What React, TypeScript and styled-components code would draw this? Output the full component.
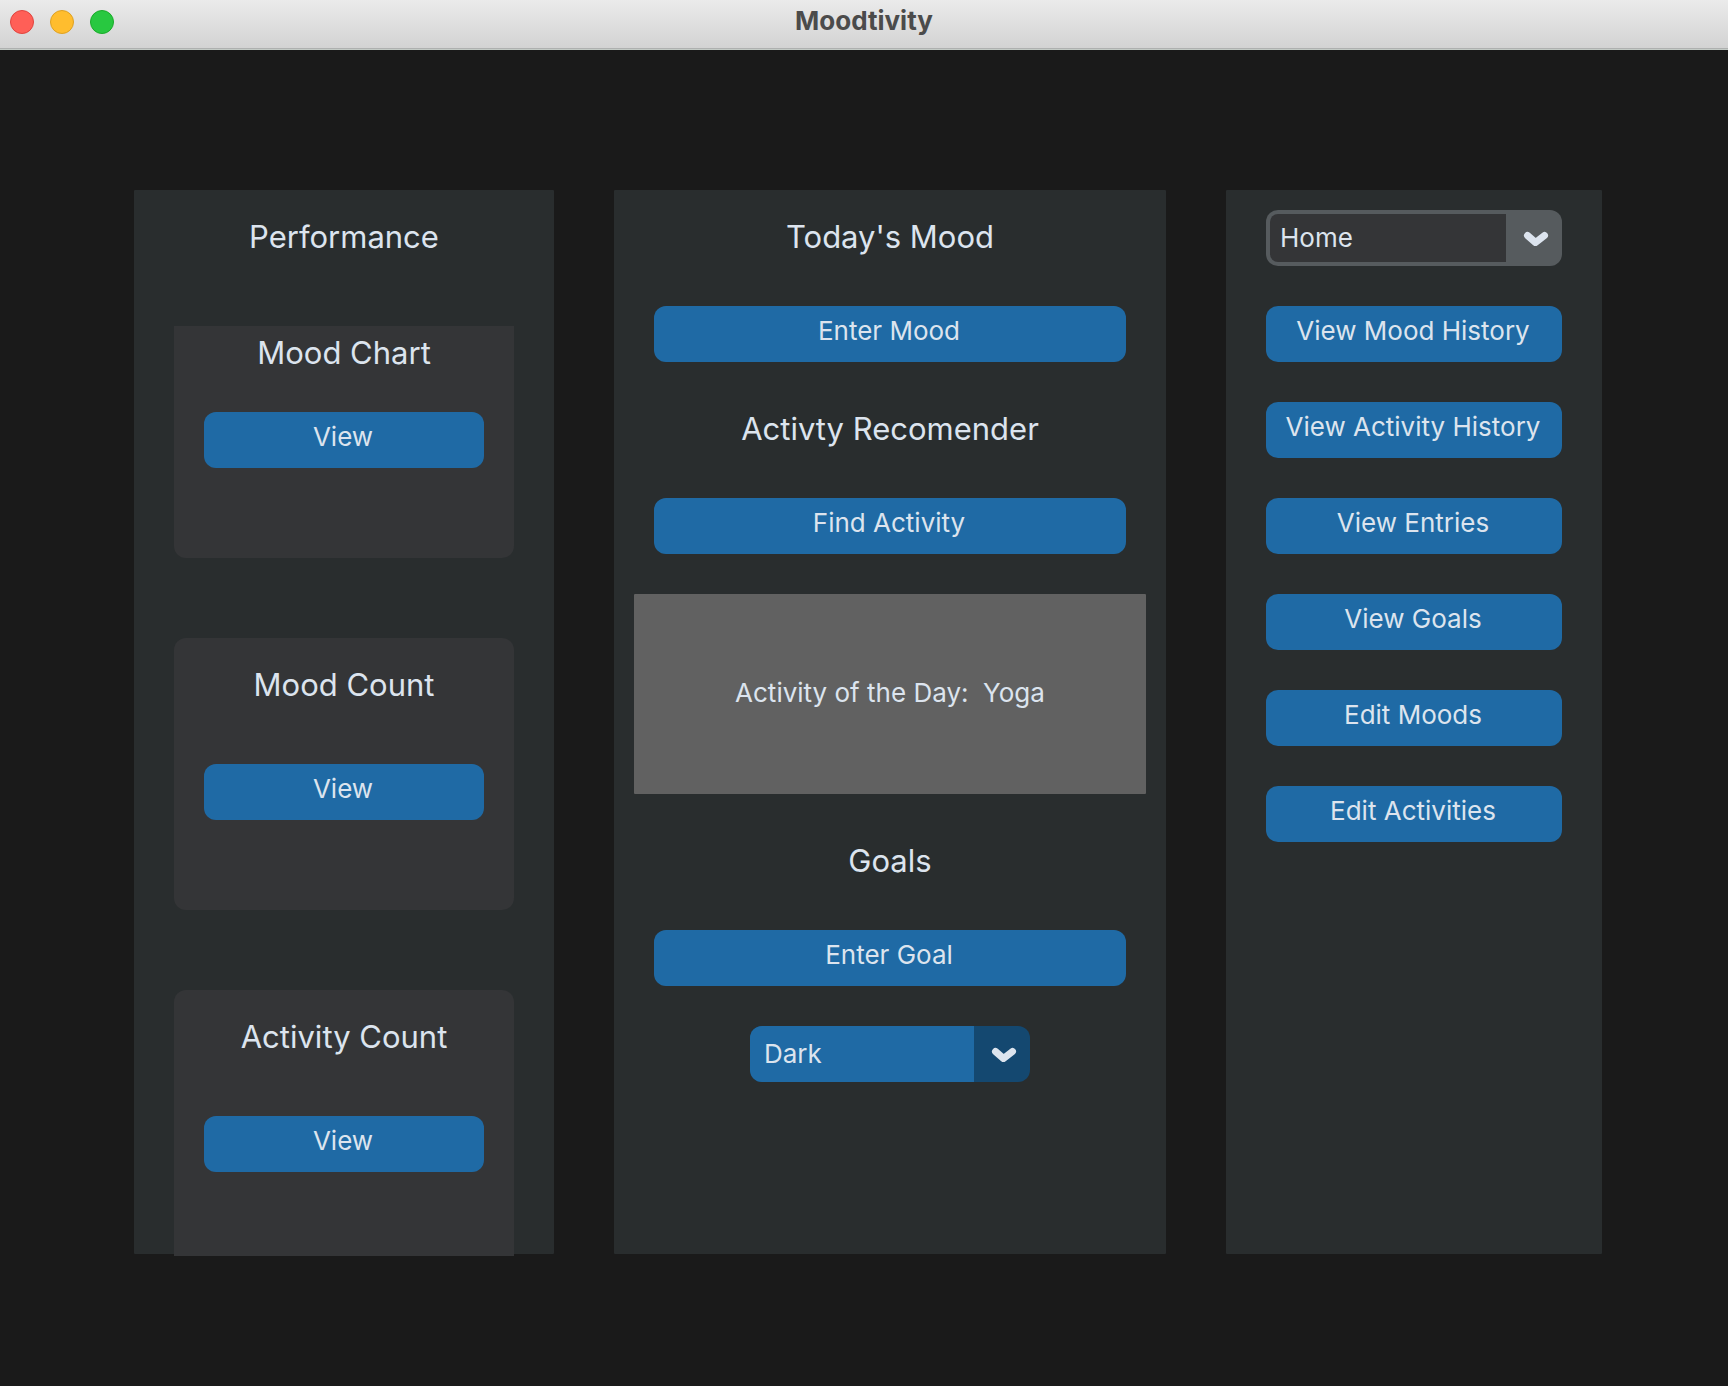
import React, { useId } from "react";
import styled, { createGlobalStyle } from "styled-components";

const color = {
  window: "#1a1a1a",
  panel: "#292d2e",
  card: "#343537",
  text: "#dce4ee",
  blue: "#1f6aa5",
  navy: "#144870",
  slate: "#565b5e",
  banner: "#616161",
};

const GlobalStyle = createGlobalStyle`
  *, *::before, *::after { box-sizing: border-box; }
  body {
    margin: 0;
    background: ${color.window};
    color: ${color.text};
    font-family: Inter, "Liberation Sans", sans-serif;
  }
  h1, h2, h3, p { margin: 0; }
`;

const Window = styled.div`
  display: flex;
  flex-direction: column;
  min-height: 100vh;
`;

const TitleBar = styled.header`
  display: grid;
  grid-template-columns: 1fr auto 1fr;
  align-items: center;
  height: 50px;
  padding: 0 10px 6px;
  background: linear-gradient(#ebebeb, #d2d2d2);
  box-shadow: inset 0 -1px #c3cac5, inset 0 -2px #aeb0af;
`;

const WindowControls = styled.div`
  display: flex;
  gap: 16px;
`;

const Light = styled.button<{ $fill: string; $edge: string }>`
  width: 24px;
  height: 24px;
  padding: 0;
  border: 1px solid ${(p) => p.$edge};
  border-radius: 50%;
  background: ${(p) => p.$fill};
`;

const Title = styled.h1`
  padding-bottom: 2px;
  color: #4b4b4b;
  font-size: 26px;
  font-weight: 700;
  line-height: 40px;
`;

const Columns = styled.main`
  flex: 1;
  display: grid;
  grid-template-columns: 420fr 552fr 376fr;
  gap: 60px;
  padding: 140px 126px 132px 134px;
`;

const Panel = styled.section`
  display: flex;
  flex-direction: column;
  gap: 40px;
  min-width: 0;
  padding: 20px 40px 0;
  background: ${color.panel};
  border-radius: 1px;
`;

const Heading = styled.h2`
  padding-bottom: 2px;
  font-size: 31px;
  font-weight: 400;
  line-height: 54px;
  text-align: center;
`;

const CardList = styled.div`
  display: flex;
  flex-direction: column;
  gap: 80px;
  margin: 20px 0 -2px;
`;

type CardShape = "hanging" | "floating" | "sinking";

const cardRadius: Record<CardShape, string> = {
  hanging: "0 0 12px 12px",
  floating: "12px",
  sinking: "12px 12px 0 0",
};

const Card = styled.article<{ $shape: CardShape }>`
  display: flex;
  flex-direction: column;
  gap: ${(p) => (p.$shape === "hanging" ? 30 : 50)}px;
  padding: ${(p) => (p.$shape === "hanging" ? 0 : 20)}px 30px
    ${(p) => (p.$shape === "sinking" ? 84 : 90)}px;
  background: ${color.card};
  border-radius: ${(p) => cardRadius[p.$shape]};
`;

const Button = styled.button`
  width: 100%;
  height: 56px;
  padding: 0 2px 6px 0;
  border: 0;
  border-radius: 12px;
  background: ${color.blue};
  color: ${color.text};
  font: 400 26px/50px Inter, "Liberation Sans", sans-serif;
  white-space: nowrap;
  cursor: pointer;
`;

const Banner = styled.p`
  display: flex;
  align-items: center;
  justify-content: center;
  height: 200px;
  margin: 0 -20px;
  padding-bottom: 4px;
  background: ${color.banner};
  border-radius: 1px;
  font-size: 26px;
  white-space: pre;
`;

const DropdownFrame = styled.div<{ $outlined?: boolean }>`
  display: grid;
  grid-template-columns: 1fr 56px;
  align-self: center;
  width: ${(p) => (p.$outlined ? "100%" : "280px")};
  height: 56px;
  overflow: hidden;
  border-radius: 12px;
  background: ${(p) => (p.$outlined ? color.slate : color.navy)};
`;

const Select = styled.select<{ $outlined?: boolean }>`
  grid-area: 1 / 1;
  height: ${(p) => (p.$outlined ? 48 : 56)}px;
  margin: ${(p) => (p.$outlined ? "4px 0 0 4px" : "0")};
  padding: 0 0 0 ${(p) => (p.$outlined ? 10 : 14)}px;
  border: 0;
  border-radius: ${(p) => (p.$outlined ? "8px 0 0 8px" : "0")};
  background: ${(p) => (p.$outlined ? color.card : color.blue)};
  color: ${color.text};
  font: 400 26px/40px Inter, "Liberation Sans", sans-serif;
  appearance: none;
`;

const Arrow = styled.svg`
  grid-area: 1 / 2;
  width: 56px;
  height: 56px;
  fill: none;
  stroke: ${color.text};
  stroke-width: 7;
  stroke-linecap: round;
  stroke-linejoin: round;
`;

const HiddenLabel = styled.label`
  position: absolute;
  width: 1px;
  height: 1px;
  overflow: hidden;
  clip-path: inset(50%);
`;

function Dropdown(props: { label: string; options: string[]; outlined?: boolean }) {
  const id = useId();
  return (
    <DropdownFrame $outlined={props.outlined}>
      <HiddenLabel htmlFor={id} aria-label={props.label} />
      <Select id={id} aria-label={props.label} $outlined={props.outlined}>
        {props.options.map((option) => (
          <option key={option}>{option}</option>
        ))}
      </Select>
      <Arrow viewBox="0 0 56 56" aria-hidden="true">
        <path d="M21.5 25.5 L29.5 32.5 L38.5 25.5" />
      </Arrow>
    </DropdownFrame>
  );
}

const cards: { title: string; shape: CardShape }[] = [
  { title: "Mood Chart", shape: "hanging" },
  { title: "Mood Count", shape: "floating" },
  { title: "Activity Count", shape: "sinking" },
];

const links = [
  "View Mood History",
  "View Activity History",
  "View Entries",
  "View Goals",
  "Edit Moods",
  "Edit Activities",
];

export default function App() {
  return (
    <>
      <GlobalStyle />
      <Window>
        <TitleBar>
          <WindowControls>
            <Light $fill="#ff5f57" $edge="#e0443e" aria-label="Close" />
            <Light $fill="#ffbd2e" $edge="#dea123" aria-label="Minimize" />
            <Light $fill="#28c840" $edge="#1aab29" aria-label="Zoom" />
          </WindowControls>
          <Title>Moodtivity</Title>
        </TitleBar>
        <Columns>
          <Panel>
            <Heading>Performance</Heading>
            <CardList>
              {cards.map((card) => (
                <Card key={card.title} $shape={card.shape}>
                  <Heading as="h3">{card.title}</Heading>
                  <Button>View</Button>
                </Card>
              ))}
            </CardList>
          </Panel>
          <Panel>
            <Heading>Today's Mood</Heading>
            <Button>Enter Mood</Button>
            <Heading>Activty Recomender</Heading>
            <Button>Find Activity</Button>
            <Banner>{"Activity of the Day:  Yoga"}</Banner>
            <Heading>Goals</Heading>
            <Button>Enter Goal</Button>
            <Dropdown label="Appearance" options={["Dark", "Light", "System"]} />
          </Panel>
          <Panel>
            <Dropdown label="Page" options={["Home"]} outlined />
            {links.map((link) => (
              <Button key={link}>{link}</Button>
            ))}
          </Panel>
        </Columns>
      </Window>
    </>
  );
}
